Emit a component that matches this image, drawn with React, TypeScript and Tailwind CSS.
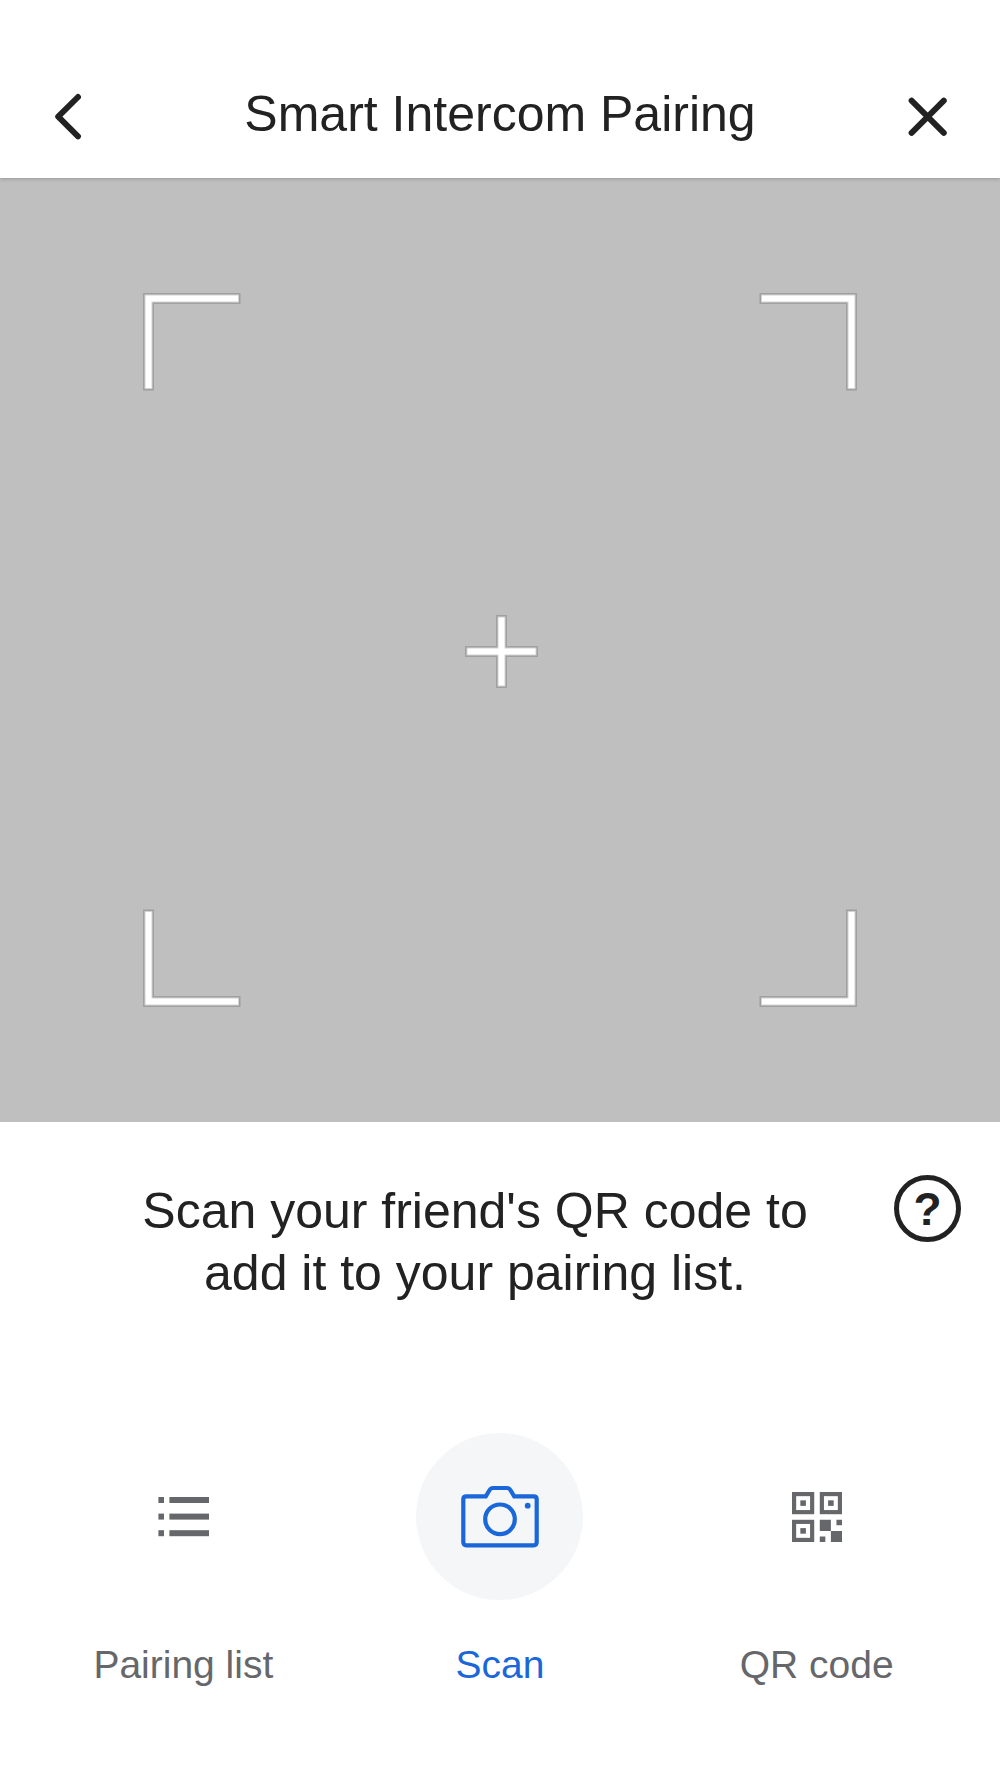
import { ReactNode, useState } from "react";
import clsx from "clsx";

function BackIcon() {
  return (
    <svg viewBox="0 0 66 66" className="size-full" fill="none" stroke="currentColor" strokeWidth="5.9" strokeLinecap="round" strokeLinejoin="round" aria-hidden="true">
      <path d="M39 13 19.2 32.7 39 52.3" />
    </svg>
  );
}

function CloseIcon() {
  return (
    <svg viewBox="0 0 66 66" className="size-full" fill="none" stroke="currentColor" strokeWidth="5.9" strokeLinecap="round" aria-hidden="true">
      <path d="M16.6 16.6 48.8 48.8M48.8 16.6 16.6 48.8" />
    </svg>
  );
}

function ListIcon() {
  return (
    <svg viewBox="0 0 51 40" className="w-[51px]" fill="currentColor" aria-hidden="true">
      {[0, 16.6, 33.2].map((y) => (
        <g key={y}>
          <rect x="0.4" y={y} width="5.6" height="6" />
          <rect x="11.4" y={y} width="39.6" height="6" />
        </g>
      ))}
    </svg>
  );
}

function CameraIcon() {
  return (
    <svg viewBox="0 0 80 64" className="w-20" fill="none" stroke="currentColor" strokeWidth="4.2" aria-hidden="true">
      <path d="M6.3 11.3H25.8L29.6 5Q30.8 3 33 3H47Q49.2 3 50.4 5L54.2 11.3H73.7Q76.7 11.3 76.7 14.3V57.3Q76.7 60.3 73.7 60.3H6.3Q3.3 60.3 3.3 57.3V14.3Q3.3 11.3 6.3 11.3Z" />
      <circle cx="40" cy="34.3" r="14.8" />
      <circle cx="67.7" cy="20.7" r="2.9" fill="currentColor" stroke="none" />
    </svg>
  );
}

function QrIcon() {
  return (
    <svg viewBox="0 0 18 18" className="w-[50px]" fill="currentColor" aria-hidden="true">
      {[
        [0, 0],
        [10, 0],
        [0, 10],
      ].map(([x, y]) => (
        <g key={`${x}-${y}`}>
          <rect x={x + 0.75} y={y + 0.75} width="6.5" height="6.5" fill="none" stroke="currentColor" strokeWidth="1.5" />
          <rect x={x + 3} y={y + 3} width="2" height="2" />
        </g>
      ))}
      <path d="M10 10h4v4h-4zM16 10h2v2h-2zM14 14h4v4h-4zM10 16h2v2h-2z" />
    </svg>
  );
}

// Each mark is a grey outline, a soft edge and a white core
const outlines = [
  {
    color: "#a0a0a0",
    width: 11,
    d: "M5.5 97.5V5.5H97.5M616.5 5.5H708.5V97.5M5.5 616.5V708.5H97.5M616.5 708.5H708.5V616.5M322 358.5H395M358.5 322V395",
  },
  {
    color: "#d2d2d2",
    width: 8,
    d: "M5.5 96V5.5H96M618 5.5H708.5V96M5.5 618V708.5H96M618 708.5H708.5V618M323.5 358.5H393.5M358.5 323.5V393.5",
  },
  {
    color: "#ffffff",
    width: 6,
    d: "M5.5 95V5.5H95M619 5.5H708.5V95M5.5 619V708.5H95M619 708.5H708.5V619M324.5 358.5H392.5M358.5 324.5V392.5",
  },
];

function Viewfinder() {
  return (
    <div className="flex justify-center bg-[#bfbfbf] py-[115px]">
      <svg viewBox="0 0 714 714" className="w-[714px] max-w-full" fill="none" aria-hidden="true">
        {outlines.map((line) => (
          <path key={line.color} d={line.d} stroke={line.color} strokeWidth={line.width} />
        ))}
      </svg>
    </div>
  );
}

const tabs: { id: string; label: string; icon: ReactNode }[] = [
  { id: "list", label: "Pairing list", icon: <ListIcon /> },
  { id: "scan", label: "Scan", icon: <CameraIcon /> },
  { id: "qr", label: "QR code", icon: <QrIcon /> },
];

function App() {
  const [active, setActive] = useState("scan");

  return (
    <div className="min-h-screen bg-white font-['Liberation_Sans',Arial,sans-serif] text-[#222222]">
      <header className="relative z-10 flex items-start bg-white px-[39px] pt-[84px] pb-7 shadow-[0_1px_4px_rgba(0,0,0,0.2)]">
        <button type="button" aria-label="Back" className="size-[66px] shrink-0">
          <BackIcon />
        </button>
        <h1 className="flex-1 text-center text-[50px] leading-[60px]">Smart Intercom Pairing</h1>
        <button type="button" aria-label="Close" className="size-[66px] shrink-0">
          <CloseIcon />
        </button>
      </header>

      <main>
        <Viewfinder />
        <section className="flex items-start pt-[53px] pr-[39px] pl-14">
          <p className="flex-1 px-16 pt-[5px] text-center text-[50px] leading-[62px]">
            Scan your friend's QR code to add it to your pairing list.
          </p>
          <button
            type="button"
            aria-label="Help"
            className="flex size-[67px] shrink-0 items-center justify-center rounded-full border-5 border-[#222222] text-[46px] leading-none font-bold"
          >
            ?
          </button>
        </section>
      </main>

      <nav className="grid grid-cols-3 px-[25px] pt-[129px] pb-16">
        {tabs.map((tab) => (
          <button
            key={tab.id}
            type="button"
            aria-pressed={tab.id === active}
            onClick={() => setActive(tab.id)}
            className={clsx(
              "flex flex-col items-center gap-[41px]",
              tab.id === active ? "text-[#1967d9]" : "text-[#65676b]"
            )}
          >
            <span
              className={clsx(
                "flex size-[167px] items-center justify-center rounded-full",
                tab.id === active && "bg-[#f4f6f8]"
              )}
            >
              {tab.icon}
            </span>
            <span className="text-[39px] leading-[48px]">{tab.label}</span>
          </button>
        ))}
      </nav>
    </div>
  );
}

export default App;
